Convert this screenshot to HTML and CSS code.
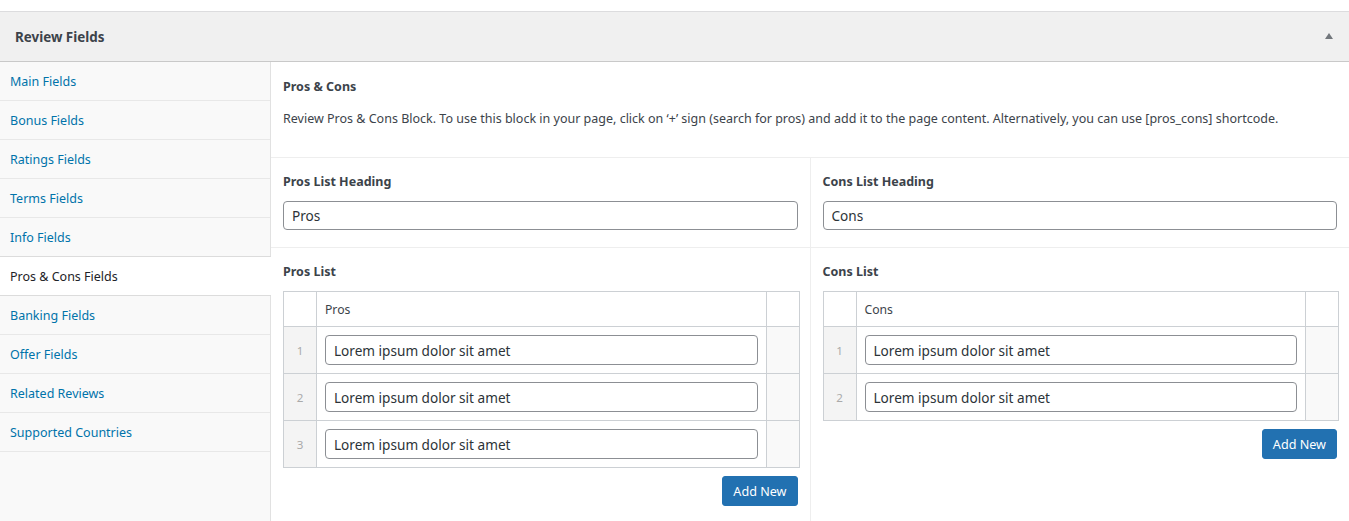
FILE: index.html
```html
<!DOCTYPE html>
<html lang="en">
<head>
<meta charset="utf-8">
<title>Review Fields</title>
<link rel="stylesheet" href="styles.css">
</head>
<body>
<div class="postbox">
  <div class="postbox-header">
    <h2 class="postbox-title">Review Fields</h2>
    <span class="toggle-arrow"></span>
  </div>
  <div class="inside">
    <ul class="tabs">
      <li class="tab"><a href="#">Main Fields</a></li>
      <li class="tab"><a href="#">Bonus Fields</a></li>
      <li class="tab"><a href="#">Ratings Fields</a></li>
      <li class="tab"><a href="#">Terms Fields</a></li>
      <li class="tab"><a href="#">Info Fields</a></li>
      <li class="tab active"><a href="#">Pros &amp; Cons Fields</a></li>
      <li class="tab"><a href="#">Banking Fields</a></li>
      <li class="tab"><a href="#">Offer Fields</a></li>
      <li class="tab"><a href="#">Related Reviews</a></li>
      <li class="tab"><a href="#">Supported Countries</a></li>
    </ul>
    <div class="fields">
      <div class="field field-message">
        <div class="label">Pros &amp; Cons</div>
        <p class="desc">Review Pros &amp; Cons Block. To use this block in your page, click on ‘+’ sign (search for pros) and add it to the page content. Alternatively, you can use [pros_cons] shortcode.</p>
      </div>
      <div class="field-row">
        <div class="field half">
          <div class="label">Pros List Heading</div>
          <input class="text-input" type="text" value="Pros">
        </div>
        <div class="field half">
          <div class="label">Cons List Heading</div>
          <input class="text-input" type="text" value="Cons">
        </div>
      </div>
      <div class="field-row last">
        <div class="field half">
          <div class="label">Pros List</div>
          <table class="repeater">
            <thead>
              <tr><th class="num"></th><th class="main">Pros</th><th class="rem"></th></tr>
            </thead>
            <tbody>
              <tr><td class="num">1</td><td class="main"><input class="text-input" type="text" value="Lorem ipsum dolor sit amet"></td><td class="rem"></td></tr>
              <tr><td class="num">2</td><td class="main"><input class="text-input" type="text" value="Lorem ipsum dolor sit amet"></td><td class="rem"></td></tr>
              <tr><td class="num">3</td><td class="main"><input class="text-input" type="text" value="Lorem ipsum dolor sit amet"></td><td class="rem"></td></tr>
            </tbody>
          </table>
          <div class="actions"><button class="button-primary" type="button">Add New</button></div>
        </div>
        <div class="field half">
          <div class="label">Cons List</div>
          <table class="repeater">
            <thead>
              <tr><th class="num"></th><th class="main">Cons</th><th class="rem"></th></tr>
            </thead>
            <tbody>
              <tr><td class="num">1</td><td class="main"><input class="text-input" type="text" value="Lorem ipsum dolor sit amet"></td><td class="rem"></td></tr>
              <tr><td class="num">2</td><td class="main"><input class="text-input" type="text" value="Lorem ipsum dolor sit amet"></td><td class="rem"></td></tr>
            </tbody>
          </table>
          <div class="actions"><button class="button-primary" type="button">Add New</button></div>
        </div>
      </div>
    </div>
  </div>
</div>
</body>
</html>
```
FILE: styles.css
```css
* { box-sizing: border-box; }
html, body { margin: 0; padding: 0; background: #fff; }
body {
  font-family: "Noto Sans", "Open Sans", sans-serif;
  font-size: 12.5px;
  color: #3c434a;
  padding-top: 11px;
}
.postbox {
  border-top: 1px solid #dcdcde;
  background: #fff;
}
.postbox-header {
  height: 50px;
  background: #f0f0f0;
  border-bottom: 1px solid #c9c9c9;
  display: flex;
  align-items: center;
  justify-content: space-between;
  padding: 1px 15px 0;
}
.postbox-title {
  margin: 0;
  font-size: 13.4px;
  font-weight: 700;
  color: #3c434a;
}
.toggle-arrow {
  width: 0; height: 0;
  border-left: 4px solid transparent;
  border-right: 4px solid transparent;
  border-bottom: 6px solid #72777c;
  margin-right: 1px;
  position: relative;
  top: -1px;
}
.inside { display: flex; }
.tabs {
  list-style: none;
  margin: 0; padding: 0;
  width: 271px;
  flex: none;
  background: #f9f9f9;
  border-right: 1px solid #e1e1e1;
}
.tab {
  height: 39px;
  border-bottom: 1px solid #e8e8e8;
  display: flex;
  align-items: center;
  padding: 1px 10px 0;
}
.tab a { color: #0073aa; text-decoration: none; }
.tab.active {
  background: #fff;
  margin-right: -1px;
  border-bottom-color: #dcdcdc;
  box-shadow: 0 -1px 0 #dcdcdc;
  position: relative;
}
.tab.active a { color: #1d2327; }
.fields { flex: 1; min-width: 0; padding-top: 1px; }
.field { padding: 15px 12px 15px; }
.label {
  font-weight: 700;
  color: #3c434a;
  line-height: 18px;
  margin-bottom: 10px;
}
.field-message { border-bottom: 1px solid #eee; padding-bottom: 15px; }
.field-message .label { margin-bottom: 14px; }
.desc { margin: 0 0 14px; line-height: 18px; }
.field-row { display: flex; border-bottom: 1px solid #eee; }
.field-row.last { border-bottom: 0; }
.half { flex: 1; min-width: 0; padding: 15px 10px 17px 12px; }
.half + .half { border-left: 1px solid #eee; }
.text-input {
  display: block;
  width: calc(100% - 2px);
  height: 29px;
  border: 1px solid #8c8f94;
  border-radius: 4px;
  padding: 0 8px;
  font-family: inherit;
  font-size: 13.6px;
  color: #2c3338;
  background: #fff;
}
.repeater {
  width: 100%;
  border-collapse: collapse;
  border: 1px solid #ccd0d4;
  table-layout: fixed;
}
.repeater th, .repeater td { border: 1px solid #ccd0d4; padding: 0; }
.repeater th {
  height: 35px;
  text-align: left;
  font-weight: 400;
  font-size: 12.2px;
  color: #3c434a;
  background: #fff;
}
.repeater th.main { padding: 0 8px; }
.repeater .num { width: 33px; }
.repeater .rem { width: 33px; }
.repeater td { height: 47px; border-top-color: #e6e6e6; }
.repeater td.num {
  background: #f4f4f4;
  color: #aaa;
  text-align: center;
  font-size: 11.6px;
}
.repeater td.main { padding: 8px; background: #fff; }
.repeater td.rem { background: #f9f9f9; }
.repeater td .text-input { width: 100%; height: 30px; }
.actions { display: flex; justify-content: flex-end; margin-top: 8px; padding-right: 2px; }
.button-primary {
  height: 30px;
  padding: 0 10px;
  background: #2271b1;
  border: 1px solid #2271b1;
  border-radius: 3px;
  color: #fff;
  font-family: inherit;
  font-size: 12.6px;
}
```
